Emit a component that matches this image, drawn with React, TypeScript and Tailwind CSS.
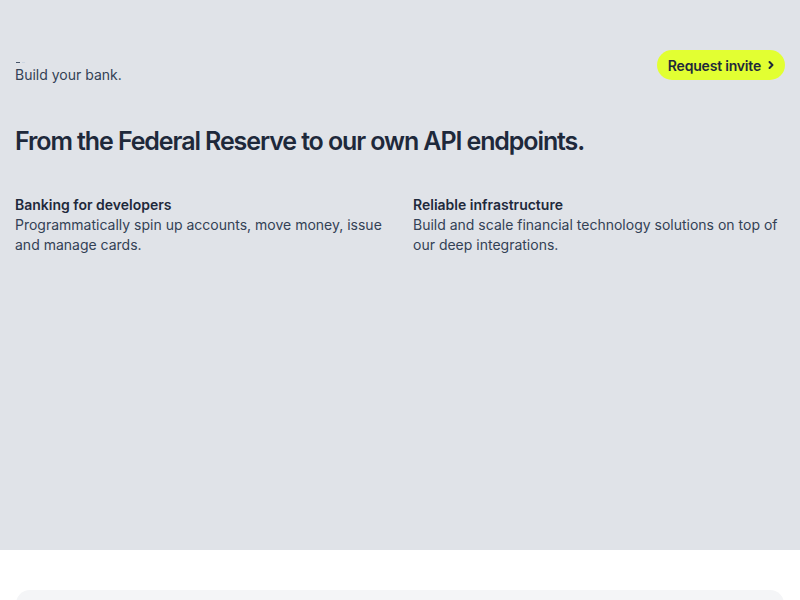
export default function App() {
  return (
    <main className="h-screen overflow-hidden bg-white font-['Inter',sans-serif] text-[#1e293b]">
      <section className="flex h-[550px] flex-col bg-[#e0e3e8] px-[15px]">
        <header className="flex items-start justify-between pt-[50px]">
          <div className="flex flex-col pt-[10px]">
            <div className="flex h-[5px] items-start gap-[2px] pl-[1px]">
              <span className="mt-[2px] h-px w-[4px] bg-[#475569]" />
              <span className="mt-[2px] h-px w-[3px] bg-[#cbd5e1]" />
            </div>
            <p className="text-[14px] leading-[20px] text-[#334155]">Build your bank.</p>
          </div>
          <button className="flex h-[30px] items-center gap-[6px] rounded-full bg-[#e2ff32] pl-[11px] pr-[10px] text-[14px] font-semibold tracking-[-0.2px] text-[#1e293b]">
            Request invite
            <svg width="8" height="10" viewBox="0 0 8 10" fill="none">
              <path d="M2.5 2l3 3-3 3" stroke="#1e293b" strokeWidth="2" strokeLinecap="round" strokeLinejoin="round" />
            </svg>
          </button>
        </header>

        <h1 className="mt-[38px] text-[25px] leading-[36px] font-semibold tracking-[-1.1px] text-[#1e293b]">
          From the Federal Reserve to our own API endpoints.
        </h1>

        <div className="mt-[36px] grid grid-cols-2 gap-[26px] text-[14px] leading-[20px]">
          <div>
            <h2 className="font-semibold text-[#1e293b]">Banking for developers</h2>
            <p className="text-[#334155]">
              Programmatically spin up accounts, move money, issue and manage cards.
            </p>
          </div>
          <div>
            <h2 className="font-semibold text-[#1e293b]">Reliable infrastructure</h2>
            <p className="text-[#334155]">
              Build and scale financial technology solutions on top of our deep integrations.
            </p>
          </div>
        </div>
      </section>

      <section className="px-[16px] pt-[40px]">
        <div className="h-[200px] rounded-t-[14px] bg-[#f4f5f7]" />
      </section>
    </main>
  );
}
